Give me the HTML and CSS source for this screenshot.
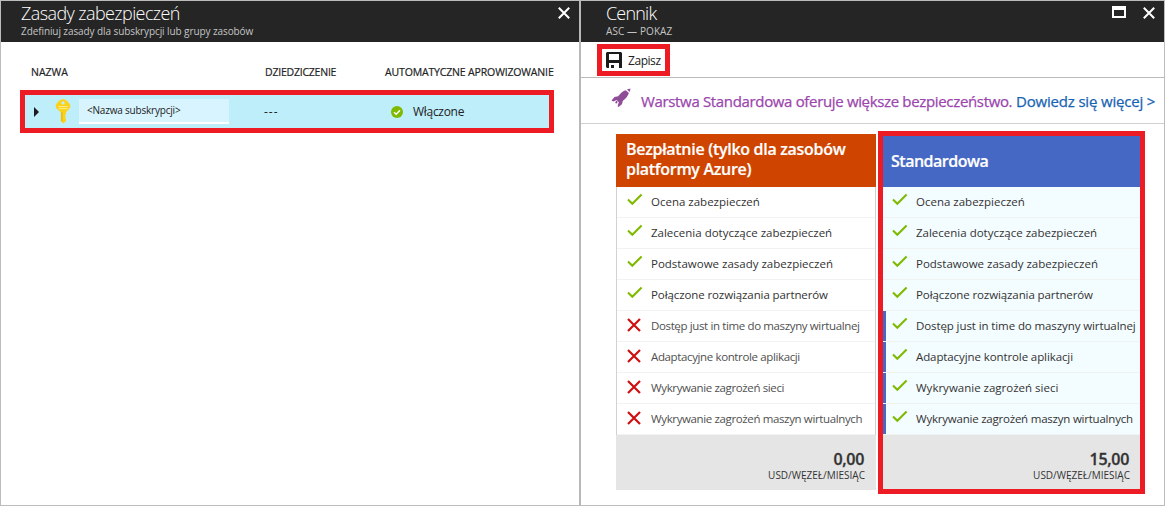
FILE: index.html
```html
<!DOCTYPE html>
<html lang="pl">
<head>
<meta charset="utf-8">
<title>Zasady zabezpieczeń</title>
<link rel="stylesheet" href="styles.css">
</head>
<body>
<svg class="defs" width="0" height="0">
  <symbol id="check" viewBox="0 0 16 13"><path d="M1 6.6 5.3 10.8 14.6 1.6" fill="none" stroke="#7fba00" stroke-width="2.1"/></symbol>
  <symbol id="cross" viewBox="0 0 14 14"><path d="M1 1 13 13M13 1 1 13" fill="none" stroke="#d01010" stroke-width="2.2"/></symbol>
  <symbol id="close" viewBox="0 0 12 12"><path d="M.8.8 11.2 11.2M11.2.8.8 11.2" fill="none" stroke="#fff" stroke-width="2"/></symbol>
</svg>
<div class="portal">
  <section class="blade policies">
    <header class="blade-head">
      <div class="heading">
        <h1 class="title title-policies">Zasady zabezpieczeń</h1>
        <p class="subtitle">Zdefiniuj zasady dla subskrypcji lub grupy zasobów</p>
      </div>
      <svg class="close"><use href="#close"/></svg>
    </header>
    <div class="columns">
      <span class="col-name">NAZWA</span>
      <span class="col-inherit">DZIEDZICZENIE</span>
      <span class="col-auto">AUTOMATYCZNE APROWIZOWANIE</span>
    </div>
    <div class="policy-row">
      <svg class="caret" viewBox="0 0 5 10"><path d="M0 0 5 5 0 10z" fill="#1b1b1b"/></svg>
      <svg class="key" viewBox="0 0 16 25">
        <path fill-rule="evenodd" d="M5 1Q8-.7 11 1L14.3 4.4Q16.2 7 14.4 9.5L11 13.3V15.2L9.7 16.4 11 17.6 9.9 18.8 11 20V22L8.4 24.4 5.8 22V13.3L1.6 9.5Q-.2 7 1.7 4.4zM8 2.2A1.7 1.7 0 0 0 8 5.6 1.7 1.7 0 0 0 8 2.2z" fill="#fcd116"/>
        <path d="M3.2 7.6H12.8M3.6 9.6H12.4" stroke="#fff0a0" stroke-width=".9"/>
        <path d="M6.2 13V22L7.5 23V13z" fill="#edb51c"/>
      </svg>
      <span class="name-box">&lt;Nazwa subskrypcji&gt;</span>
      <span class="inherit">---</span>
      <svg class="status" viewBox="0 0 12 12"><circle cx="6" cy="6" r="6" fill="#7fba00"/><path d="M3 6.2 5.2 8.3 9 4.2" fill="none" stroke="#fff" stroke-width="1.4"/></svg>
      <span class="enabled">Włączone</span>
    </div>
  </section>

  <section class="blade pricing">
    <header class="blade-head">
      <div class="heading">
        <h1 class="title title-pricing">Cennik</h1>
        <p class="subtitle subtitle-pricing">ASC — POKAZ</p>
      </div>
      <span class="maximize"></span>
      <svg class="close"><use href="#close"/></svg>
    </header>
    <div class="toolbar">
      <div class="save">
        <svg class="disk" viewBox="0 0 16 16"><path fill-rule="evenodd" d="M1 0H15L16 1V16H13V11H3V16H1L0 15V1zM3 2V8H13V2z" fill="#1b1b1b"/><path d="M5 13H8V16H5z" fill="#1b1b1b"/></svg>
        <span>Zapisz</span>
      </div>
    </div>
    <div class="banner">
      <svg class="rocket" viewBox="0 0 20 20"><path d="M19.5.4 18.7 4 15.9 1.5zM14.7 2.2 17.9 5.1C16.9 8.4 14.4 10.9 11.9 12.8L10.9 16.2 7.5 19 6.6 18.2 7.8 14.2 5.7 12.1 2.3 13.4.5 12.5 3.5 9.1 7.2 8.2C9.1 5.8 11.2 3.3 14.7 2.2z" fill="#904d97"/><path d="M5.5 12.6 6.8 14 5.2 15.8 4.1 14.6z" fill="#904d97"/></svg>
      <span class="offer">Warstwa Standardowa oferuje większe bezpieczeństwo.</span>
      <a class="more">Dowiedz się więcej &gt;</a>
    </div>
    <div class="plans">
      <article class="plan free">
        <h2 class="plan-name">Bezpłatnie (tylko dla zasobów<br>platformy Azure)</h2>
        <ul class="features">
          <li><svg class="check"><use href="#check"/></svg><span>Ocena zabezpieczeń</span></li>
          <li><svg class="check"><use href="#check"/></svg><span>Zalecenia dotyczące zabezpieczeń</span></li>
          <li><svg class="check"><use href="#check"/></svg><span>Podstawowe zasady zabezpieczeń</span></li>
          <li><svg class="check"><use href="#check"/></svg><span class="snug">Połączone rozwiązania partnerów</span></li>
          <li class="off"><svg class="cross"><use href="#cross"/></svg><span>Dostęp just in time do maszyny wirtualnej</span></li>
          <li class="off"><svg class="cross"><use href="#cross"/></svg><span>Adaptacyjne kontrole aplikacji</span></li>
          <li class="off"><svg class="cross"><use href="#cross"/></svg><span>Wykrywanie zagrożeń sieci</span></li>
          <li class="off"><svg class="cross"><use href="#cross"/></svg><span>Wykrywanie zagrożeń maszyn wirtualnych</span></li>
        </ul>
        <footer class="price"><strong>0,00</strong><span>USD/WĘZEŁ/MIESIĄC</span></footer>
      </article>
      <article class="plan standard">
        <h2 class="plan-name">Standardowa</h2>
        <ul class="features">
          <li><svg class="check"><use href="#check"/></svg><span>Ocena zabezpieczeń</span></li>
          <li><svg class="check"><use href="#check"/></svg><span>Zalecenia dotyczące zabezpieczeń</span></li>
          <li><svg class="check"><use href="#check"/></svg><span>Podstawowe zasady zabezpieczeń</span></li>
          <li><svg class="check"><use href="#check"/></svg><span class="snug">Połączone rozwiązania partnerów</span></li>
          <li class="extra"><svg class="check"><use href="#check"/></svg><span class="snug">Dostęp just in time do maszyny wirtualnej</span></li>
          <li class="extra"><svg class="check"><use href="#check"/></svg><span class="snug">Adaptacyjne kontrole aplikacji</span></li>
          <li class="extra"><svg class="check"><use href="#check"/></svg><span>Wykrywanie zagrożeń sieci</span></li>
          <li class="extra"><svg class="check"><use href="#check"/></svg><span class="tight">Wykrywanie zagrożeń maszyn wirtualnych</span></li>
        </ul>
        <footer class="price"><strong>15,00</strong><span>USD/WĘZEŁ/MIESIĄC</span></footer>
      </article>
    </div>
  </section>
</div>
</body>
</html>
```
FILE: styles.css
```css
* { box-sizing: border-box; margin: 0; padding: 0; }
body { font-family: "Open Sans", "Noto Sans", sans-serif; color: #222; background: #fff; white-space: nowrap; overflow: hidden; }
svg { display: block; flex: none; }
.defs { display: none; }
.portal { display: flex; width: 1165px; height: 506px; border: 1px solid #bcbcbc; }
.policies { width: 580px; border-right: 2px solid #b8b8b8; }
.pricing { width: 583px; }
.blade-head { display: flex; height: 41px; padding: 5px 9px 0 20px; background: #252525; color: #fff; }
.pricing .blade-head { padding-left: 25px; }
.heading { flex: 1; }
.title { font-size: 18px; font-weight: 300; line-height: 24px; margin-top: -5px; }
.title-policies { letter-spacing: -0.6px; }
.title-pricing { letter-spacing: -0.8px; }
.subtitle { font-size: 10px; line-height: 14px; margin-top: -1px; color: #c4c4c4; letter-spacing: -0.09px; }
.subtitle-pricing { letter-spacing: 0.1px; }
.close { width: 12px; height: 12px; margin-top: 1px; }
.maximize { width: 14px; height: 12px; margin-right: 17px; border: 2px solid #fff; border-top-width: 4px; }

.columns { display: flex; padding: 23px 0 0 30px; font-size: 10.5px; line-height: 15px; height: 48px; -webkit-text-stroke: .2px; }
.col-name { width: 234px; }
.col-inherit { width: 120px; letter-spacing: -0.22px; }
.col-auto { letter-spacing: -0.15px; }
.policy-row { display: flex; align-items: center; width: 534px; height: 43px; margin-left: 19px; padding-left: 9px; border: 5px solid #ed1c24; background: #bdeef9; font-size: 12px; }
.caret { width: 5px; height: 10px; }
.key { width: 16px; height: 25px; margin-left: 16px; }
.name-box { width: 150px; height: 25px; margin-left: 8px; padding-left: 8px; background: #d8f4fe; border-bottom: 2px solid #fff; font-size: 10px; line-height: 23px; letter-spacing: -0.2px; }
.inherit { margin-left: 35px; width: 127px; letter-spacing: 1px; }
.status { width: 12px; height: 12px; }
.enabled { margin-left: 10px; letter-spacing: -0.3px; }

.toolbar { height: 36px; padding: 2px 0 0 16px; border-bottom: 1px solid #bbb; }
.save { display: flex; align-items: center; gap: 6px; width: 73px; height: 32px; padding-left: 4px; border: 5px solid #ed1c24; font-size: 12px; letter-spacing: -0.45px; }
.disk { width: 16px; height: 16px; }
.banner { display: flex; height: 46px; padding-left: 30px; border-bottom: 1px solid #d0d0d0; font-size: 15px; line-height: 46px; -webkit-text-stroke: .25px; }
.rocket { width: 20px; height: 20px; margin-top: 10px; }
.offer { width: 375px; margin-left: 10px; color: #9b45ae; letter-spacing: -0.34px; }
.more { color: #1763b3; letter-spacing: -0.18px; }

.plans { display: flex; align-items: flex-start; gap: 2px; padding: 7px 0 0 35px; }
.free { width: 260px; margin-top: 3px; }
.standard { width: 267px; border: 5px solid #ed1c24; }
.plan-name { display: flex; flex-direction: column; justify-content: center; height: 53px; padding: 0 0 4px 10px; color: #fff; font-size: 16px; font-weight: 600; line-height: 20px; letter-spacing: -0.3px; -webkit-text-stroke: .2px; background: #cf4500; }
.standard .plan-name { height: 51px; padding: 0 0 1px 8px; letter-spacing: -0.5px; background: #4668c5; }
.features { list-style: none; font-size: 11.5px; color: #333; }
.free .features { border: solid #d2d2d2; border-width: 0 1px; }
.features li { display: flex; height: 31px; padding-left: 9px; border-bottom: 1px solid #f1f2f2; line-height: 30px; }
.free .features li { padding-left: 10px; }
.features li span { flex: none; }
.standard .features li { background: #f3fcff; }
.standard .features li.extra { padding-left: 0; }
.extra::before { content: ""; flex: none; width: 3px; margin-right: 6px; background: #4668c5; }
.off { color: #505050; }
.off span { letter-spacing: -0.37px; }
.snug { letter-spacing: -0.1px; }
.tight { letter-spacing: -0.22px; }
.check { width: 16px; height: 13px; margin: 6px 8px 0 0; }
.cross { width: 14px; height: 14px; margin: 7px 10px 0 0; }
.price { display: flex; flex-direction: column; align-items: flex-end; height: 55px; padding: 14px 11px 0 0; background: #e5e5e5; color: #333; }
.standard .price { height: 54px; }
.free .price { padding-right: 12px; }
.price strong { font-size: 16px; line-height: 20px; font-weight: 600; letter-spacing: -0.3px; -webkit-text-stroke: .3px; }
.price span { font-size: 10px; line-height: 13px; margin-right: -1px; }
```
